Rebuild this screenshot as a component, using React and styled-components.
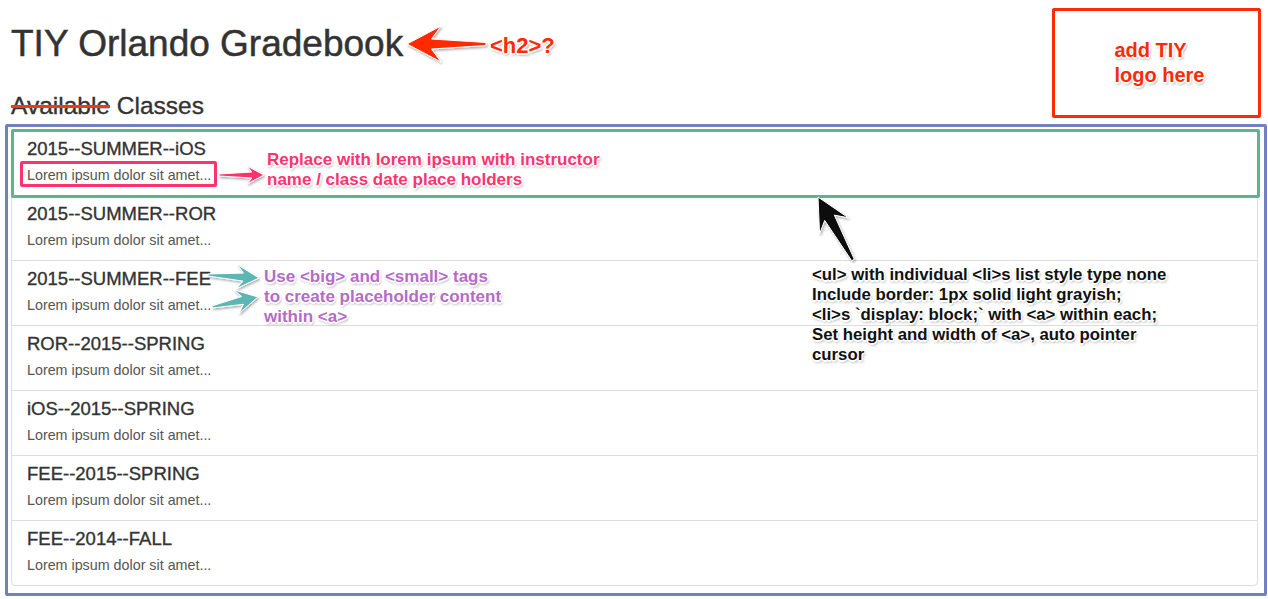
import React from 'react'
import { styled, createGlobalStyle } from 'styled-components'

const GlobalStyle = createGlobalStyle`
  html, body {
    margin: 0;
    padding: 0;
    background: #fff;
  }
  * {
    box-sizing: border-box;
  }
`

const Page = styled.div`
  position: relative;
  width: 1268px;
  height: 599px;
  padding: 0 10px 0 11px;
  overflow: hidden;
  font-family: "Liberation Sans", Helvetica, Arial, sans-serif;
  color: #333;
`

const Title = styled.h1`
  margin: 24px 0 0;
  font-size: 37px;
  line-height: 1.1;
  font-weight: 500;
  -webkit-text-stroke: 0.5px #333;
`

const Subtitle = styled.h3`
  margin: 28px 0 10px;
  font-size: 24.5px;
  line-height: 1.1;
  font-weight: 500;
  -webkit-text-stroke: 0.35px #333;
`

const Struck = styled.span`
  text-decoration: line-through;
  text-decoration-color: #f03a1e;
  text-decoration-thickness: 3px;
`

const ClassList = styled.ul`
  list-style: none;
  margin: 0;
  padding: 0;
`

const ClassItem = styled.li`
  display: block;
  margin-bottom: -1px;
  border: 1px solid #ddd;
  background: #fff;

  &:first-child {
    border-radius: 4px 4px 0 0;
  }

  &:last-child {
    border-radius: 0 0 4px 4px;
  }
`

const ClassLink = styled.a`
  display: flex;
  flex-direction: column;
  gap: 6px;
  height: 64px;
  padding: 8px 15px 0;
  color: inherit;
  text-decoration: none;
  cursor: pointer;
`

const Big = styled.big`
  display: block;
  font-size: 18.5px;
  line-height: 20px;
  font-weight: 500;
  color: #333;
  -webkit-text-stroke: 0.35px #333;
`

const Small = styled.small`
  display: block;
  font-size: 14.3px;
  line-height: 20px;
  color: #555;
`

/* ---- skitch style annotations on top of the page ---- */

const Outline = styled.div`
  position: absolute;
  left: ${(p) => p.$x}px;
  top: ${(p) => p.$y}px;
  width: ${(p) => p.$w}px;
  height: ${(p) => p.$h}px;
  border: 3px solid ${(p) => p.$color};
  border-radius: 2px;
  pointer-events: none;
`

const LogoBox = styled(Outline)`
  display: flex;
  align-items: center;
  justify-content: center;
`

const Note = styled.div`
  position: absolute;
  left: ${(p) => p.$x}px;
  top: ${(p) => p.$y}px;
  font-family: "Liberation Sans", Helvetica, Arial, sans-serif;
  font-weight: bold;
  font-size: ${(p) => p.$size || 17}px;
  line-height: ${(p) => p.$lh || 20}px;
  color: ${(p) => p.$color};
  white-space: nowrap;
  text-shadow:
    1.5px 0 0 #fff, -1.5px 0 0 #fff, 0 1.5px 0 #fff, 0 -1.5px 0 #fff,
    1px 1px 0 #fff, -1px -1px 0 #fff, 1px -1px 0 #fff, -1px 1px 0 #fff,
    1px 2px 3px rgba(0, 0, 0, 0.5);
`

const LogoNote = styled(Note)`
  position: static;
  font-size: 20px;
  line-height: 25px;
  margin-left: 6px;
`

const ArrowLayer = styled.svg`
  position: absolute;
  left: 0;
  top: 0;
  pointer-events: none;
`

const arrowPoints = ([x1, y1], [x2, y2], { head, headW, tailW, neckW }) => {
  const len = Math.hypot(x2 - x1, y2 - y1)
  const dx = (x2 - x1) / len
  const dy = (y2 - y1) / len
  const nx = -dy
  const ny = dx
  const bx = x2 - dx * head
  const by = y2 - dy * head
  const kx = x2 - dx * head * 0.72
  const ky = y2 - dy * head * 0.72
  const pts = [
    [x1 + (nx * tailW) / 2, y1 + (ny * tailW) / 2],
    [kx + (nx * neckW) / 2, ky + (ny * neckW) / 2],
    [bx + (nx * headW) / 2, by + (ny * headW) / 2],
    [x2, y2],
    [bx - (nx * headW) / 2, by - (ny * headW) / 2],
    [kx - (nx * neckW) / 2, ky - (ny * neckW) / 2],
    [x1 - (nx * tailW) / 2, y1 - (ny * tailW) / 2],
  ]
  return pts.map((p) => p.map((v) => v.toFixed(1)).join(',')).join(' ')
}

const arrows = [
  { from: [486, 44], to: [407, 44], color: '#ff2a06', head: 34, headW: 36, tailW: 3, neckW: 10 },
  { from: [219, 175], to: [264, 175], color: '#ff3370', head: 17, headW: 18, tailW: 2, neckW: 6 },
  { from: [208, 275], to: [259, 278], color: '#5cb6b3', head: 22, headW: 24, tailW: 2, neckW: 8 },
  { from: [212, 307], to: [258, 297], color: '#5cb6b3', head: 22, headW: 24, tailW: 2, neckW: 8 },
  { from: [853, 260], to: [818, 197], color: '#0a0a0a', head: 33, headW: 33, tailW: 3, neckW: 11 },
]

const classes = [
  '2015--SUMMER--iOS',
  '2015--SUMMER--ROR',
  '2015--SUMMER--FEE',
  'ROR--2015--SPRING',
  'iOS--2015--SPRING',
  'FEE--2015--SPRING',
  'FEE--2014--FALL',
]

const App = () => {
  return (
    <>
      <GlobalStyle />
      <Page>
        <Title>TIY Orlando Gradebook</Title>
        <Subtitle>
          <Struck>Available</Struck> Classes
        </Subtitle>

        <ClassList>
          {classes.map((name) => (
            <ClassItem key={name}>
              <ClassLink>
                <Big>{name}</Big>
                <Small>Lorem ipsum dolor sit amet...</Small>
              </ClassLink>
            </ClassItem>
          ))}
        </ClassList>

        <Outline $x={5} $y={124} $w={1262} $h={472} $color="#7282bc" />
        <Outline $x={11} $y={129} $w={1249} $h={69} $color="#5fb48d" />
        <Outline $x={20} $y={161} $w={197} $h={26} $color="#ff3370" />

        <LogoBox $x={1052} $y={8} $w={209} $h={110} $color="#ff2a06">
          <LogoNote $color="#ff2a06">
            add TIY
            <br />
            logo here
          </LogoNote>
        </LogoBox>

        <ArrowLayer width="1268" height="599" viewBox="0 0 1268 599">
          <defs>
            <filter id="drop" x="-20%" y="-20%" width="140%" height="140%">
              <feDropShadow dx="1" dy="1.5" stdDeviation="1.2" floodColor="#000" floodOpacity="0.35" />
            </filter>
          </defs>
          {arrows.map((a, i) => (
            <polygon
              key={i}
              points={arrowPoints(a.from, a.to, a)}
              fill={a.color}
              stroke="#fff"
              strokeWidth="1"
              strokeLinejoin="round"
              filter="url(#drop)"
            />
          ))}
        </ArrowLayer>

        <Note $x={490} $y={33} $size={22} $lh={26} $color="#ff2a06">
          {'<h2>?'}
        </Note>

        <Note $x={267} $y={150} $color="#ff3370">
          Replace with lorem ipsum with instructor
          <br />
          name / class date place holders
        </Note>

        <Note $x={264} $y={267} $color="#b46cc6">
          {'Use <big> and <small> tags'}
          <br />
          to create placeholder content
          <br />
          {'within <a>'}
        </Note>

        <Note $x={812} $y={265} $size={16.8} $color="#111">
          {'<ul> with individual <li>s list style type none'}
          <br />
          Include border: 1px solid light grayish;
          <br />
          {'<li>s `display: block;` with <a> within each;'}
          <br />
          {'Set height and width of <a>, auto pointer'}
          <br />
          cursor
        </Note>
      </Page>
    </>
  )
}

export default App
